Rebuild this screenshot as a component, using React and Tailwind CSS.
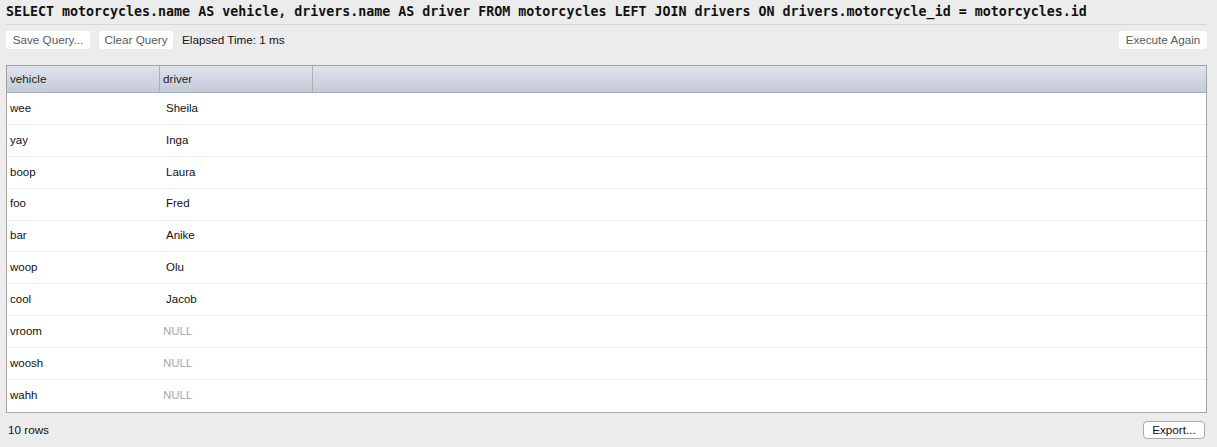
import React from 'react';

const rows = [
  ['wee', 'Sheila'],
  ['yay', 'Inga'],
  ['boop', 'Laura'],
  ['foo', 'Fred'],
  ['bar', 'Anike'],
  ['woop', 'Olu'],
  ['cool', 'Jacob'],
  ['vroom', null],
  ['woosh', null],
  ['wahh', null],
];

const sans = { fontFamily: '"Liberation Sans", Arial, sans-serif' };

function FlatButton({ children, className = '' }) {
  return (
    <button
      className={`h-[18px] px-[4px] bg-white rounded-[3px] text-[11.7px] text-[#5a5a5a] leading-none whitespace-nowrap ${className}`}
    >
      {children}
    </button>
  );
}

export default function App() {
  return (
    <div className="h-[447px] bg-[#ececec] pl-[6px] pr-[10px] flex flex-col" style={sans}>
      <div className="h-[25px] flex items-center border-b border-[#d6d6d6] pb-[1px]">
        <span
          className="text-[13.3px] font-bold text-[#111] whitespace-nowrap"
          style={{ fontFamily: '"DejaVu Sans Mono", "Liberation Mono", monospace' }}
        >
          SELECT motorcycles.name AS vehicle, drivers.name AS driver FROM motorcycles LEFT JOIN drivers ON drivers.motorcycle_id = motorcycles.id
        </span>
      </div>

      <div className="mt-[6px] h-[18px] flex items-center">
        <FlatButton className="w-[84px]">Save Query...</FlatButton>
        <FlatButton className="ml-[9px] w-[74px]">Clear Query</FlatButton>
        <span className="ml-[9px] text-[11.7px] text-[#111]">Elapsed Time: 1 ms</span>
        <FlatButton className="ml-auto w-[88px]">Execute Again</FlatButton>
      </div>

      <div className="mt-[16px] h-[348px] border border-[#a3a3a3] bg-white flex flex-col">
        <div className="h-[27px] flex text-[11.7px] text-[#222] bg-gradient-to-b from-[#dfe4ee] to-[#c3cad7] border-b border-[#a9afba]">
          <div className="w-[153px] border-r border-[#aab1bd] flex items-center pl-[3px]">vehicle</div>
          <div className="w-[153px] border-r border-[#aab1bd] flex items-center pl-[3px]">driver</div>
          <div className="flex-1" />
        </div>
        {rows.map(([v, d], i) => (
          <div
            key={v}
            className={`h-[32px] flex items-center text-[11.5px] text-[#111] ${i < rows.length - 1 ? 'border-b border-[#efefef]' : ''}`}
          >
            <div className="w-[154px] pl-[3px]">{v}</div>
            {d ? (
              <div className="pl-[5px]">{d}</div>
            ) : (
              <div className="pl-[2px] text-[#a8a8a8]">NULL</div>
            )}
          </div>
        ))}
      </div>

      <div className="flex-1 flex items-center pl-[2px] pr-[2px]">
        <span className="text-[11.7px] text-[#111]">10 rows</span>
        <button className="ml-auto h-[18px] w-[62px] bg-white border border-[#a8a8a8] rounded-[4px] text-[11.7px] text-[#111] leading-none">
          Export...
        </button>
      </div>
    </div>
  );
}
